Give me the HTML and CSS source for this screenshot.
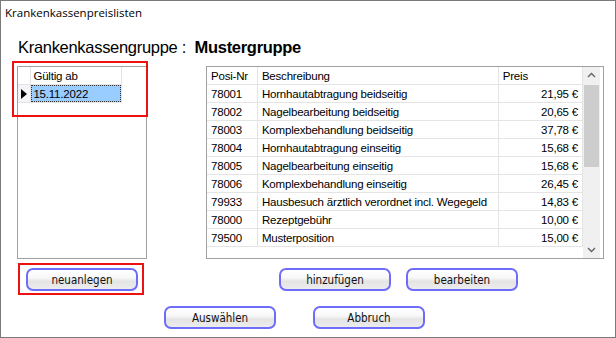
FILE: index.html
```html
<!DOCTYPE html>
<html lang="de">
<head>
  <meta charset="UTF-8">
  <title>Krankenkassenpreislisten</title>
  <link rel="stylesheet" href="styles.css">
</head>
<body>
  <div class="window">
    <div class="titlebar">Krankenkassenpreislisten</div>

    <h1 class="heading">Krankenkassengruppe :&nbsp; <b>Mustergruppe</b></h1>

    <div class="content">
      <div class="left">
        <div class="grid-left">
          <table class="dates">
            <tr class="head">
              <td class="ind"></td>
              <td class="date-col">Gültig ab</td>
              <td class="rest"></td>
            </tr>
            <tr>
              <td class="ind"><span class="arrow"></span></td>
              <td class="date-col"><span class="selected">15.11.2022</span></td>
              <td class="rest"></td>
            </tr>
          </table>
          <div class="mark mark-grid"></div>
        </div>
        <div class="btn-row left-btns">
          <button class="btn">neuanlegen</button>
          <div class="mark mark-btn"></div>
        </div>
      </div>

      <div class="right">
        <div class="grid-right">
          <table class="prices">
            <tr class="head">
              <td class="nr">Posi-Nr</td>
              <td class="desc">Beschreibung</td>
              <td class="price">Preis</td>
            </tr>
            <tr><td class="nr">78001</td><td class="desc">Hornhautabtragung beidseitig</td><td class="price num">21,95 €</td></tr>
            <tr><td class="nr">78002</td><td class="desc">Nagelbearbeitung beidseitig</td><td class="price num">20,65 €</td></tr>
            <tr><td class="nr">78003</td><td class="desc">Komplexbehandlung beidseitig</td><td class="price num">37,78 €</td></tr>
            <tr><td class="nr">78004</td><td class="desc">Hornhautabtragung einseitig</td><td class="price num">15,68 €</td></tr>
            <tr><td class="nr">78005</td><td class="desc">Nagelbearbeitung einseitig</td><td class="price num">15,68 €</td></tr>
            <tr><td class="nr">78006</td><td class="desc">Komplexbehandlung einseitig</td><td class="price num">26,45 €</td></tr>
            <tr><td class="nr">79933</td><td class="desc">Hausbesuch ärztlich verordnet incl. Wegegeld</td><td class="price num">14,83 €</td></tr>
            <tr><td class="nr">78000</td><td class="desc">Rezeptgebühr</td><td class="price num">10,00 €</td></tr>
            <tr><td class="nr">79500</td><td class="desc">Musterposition</td><td class="price num">15,00 €</td></tr>
          </table>
          <div class="scrollbar">
            <svg class="chev" width="17" height="17" viewBox="0 0 17 17"><path d="M5 10 L8.5 6.5 L12 10" fill="none" stroke="#606060" stroke-width="1.3"/></svg>
            <div class="track"><div class="thumb"></div></div>
            <svg class="chev" width="17" height="17" viewBox="0 0 17 17"><path d="M5 7 L8.5 10.5 L12 7" fill="none" stroke="#606060" stroke-width="1.3"/></svg>
          </div>
        </div>
        <div class="btn-row right-btns">
          <button class="btn">hinzufügen</button>
          <button class="btn">bearbeiten</button>
        </div>
      </div>
    </div>

    <div class="btn-row bottom-btns">
      <button class="btn">Auswählen</button>
      <button class="btn">Abbruch</button>
    </div>
  </div>
</body>
</html>
```

FILE: styles.css
```css
body {
  margin: 0;
  background: #ffffff;
  font-family: "Liberation Sans", Arial, sans-serif;
}

.window {
  width: 616px;
  height: 338px;
  box-sizing: border-box;
  border: 1px solid #7a7a7a;
  background: #ffffff;
}

.titlebar {
  height: 25px;
  line-height: 24px;
  padding-left: 4px;
  font-family: "Open Sans", "Liberation Sans", sans-serif;
  font-size: 11.5px;
  color: #000;
}

.heading {
  margin: 9px 0 0 17px;
  height: 31px;
  font-size: 16.5px;
  letter-spacing: -0.3px;
  font-weight: normal;
  line-height: 24px;
}

.heading b {
  font-weight: bold;
}

.content {
  display: flex;
  padding-left: 16px;
  gap: 59px;
}

.left {
  width: 130px;
}

.right {
  width: 398px;
}

/* grids */

.grid-left,
.grid-right {
  position: relative;
  height: 193px;
  box-sizing: border-box;
  border: 1px solid #a0a0a0;
  background: #fff;
}

.grid-right {
  display: flex;
  align-items: flex-start;
}

table {
  border-collapse: collapse;
  font-size: 11.5px;
  letter-spacing: -0.2px;
}

td {
  height: 16px;
  padding: 1px 4px 0 4px;
  border: 1px solid #e4e4e4;
  white-space: nowrap;
}

.head td {
  border-top: none;
}

td:first-child {
  border-left: none;
}

.dates .ind {
  width: 13px;
  height: 17px;
  padding: 0;
  background: #f4f4f8;
  border-left: none;
}

.dates .head .ind {
  background: #fff;
}

.dates .date-col {
  width: 95px;
  height: 17px;
  padding: 0;
}

.dates .head .date-col {
  height: 16px;
  padding: 1px 0 0 2px;
  width: 93px;
}

.dates .rest {
  width: 19px;
  border: none;
}

.dates .head .rest {
  border-bottom: none;
}

.arrow {
  display: block;
  width: 0;
  height: 0;
  margin-left: 3px;
  border-top: 5px solid transparent;
  border-bottom: 5px solid transparent;
  border-left: 6px solid #000;
}

.selected {
  display: block;
  height: 15px;
  line-height: 16px;
  padding-left: 1px;
  background: #99ccff;
  border: 1px dotted #333;
}

.prices {
  width: 376px;
}

.prices .nr {
  width: 42px;
}

.prices .desc {
  width: 232px;
}

.prices .price {
  width: 76px;
}

.prices .num {
  text-align: right;
}

.scrollbar {
  width: 17px;
  height: 191px;
  background: #f0f0f0;
  display: flex;
  flex-direction: column;
}

.chev {
  display: block;
  flex: none;
}

.track {
  flex: 1;
  padding: 1px 1px 0 1px;
}

.thumb {
  height: 82px;
  background: #cdcdcd;
}

/* buttons */

.btn-row {
  position: relative;
  display: flex;
}

.btn {
  width: 112px;
  height: 23px;
  padding: 0;
  border: 2px solid #6d6dfa;
  border-radius: 7px;
  background: linear-gradient(#ffffff 0%, #f8f8f8 40%, #e4e4e4 60%, #ececec 100%);
  font-family: "DejaVu Sans Condensed", "DejaVu Sans", Tahoma, sans-serif;
  font-size: 11.5px;
  color: #111;
}

.left-btns {
  margin-top: 9px;
  padding-left: 9px;
}

.right-btns {
  margin-top: 9px;
  padding-left: 73px;
  gap: 15px;
}

.bottom-btns {
  margin-top: 15px;
  padding-left: 163px;
  gap: 37px;
}

/* red annotation frames */

.mark {
  position: absolute;
  border: 2px solid #ee1111;
  pointer-events: none;
}

.mark-grid {
  left: -6px;
  top: -6px;
  width: 132px;
  height: 52px;
}

.mark-btn {
  left: 1px;
  top: -5px;
  width: 122px;
  height: 28px;
}
```
